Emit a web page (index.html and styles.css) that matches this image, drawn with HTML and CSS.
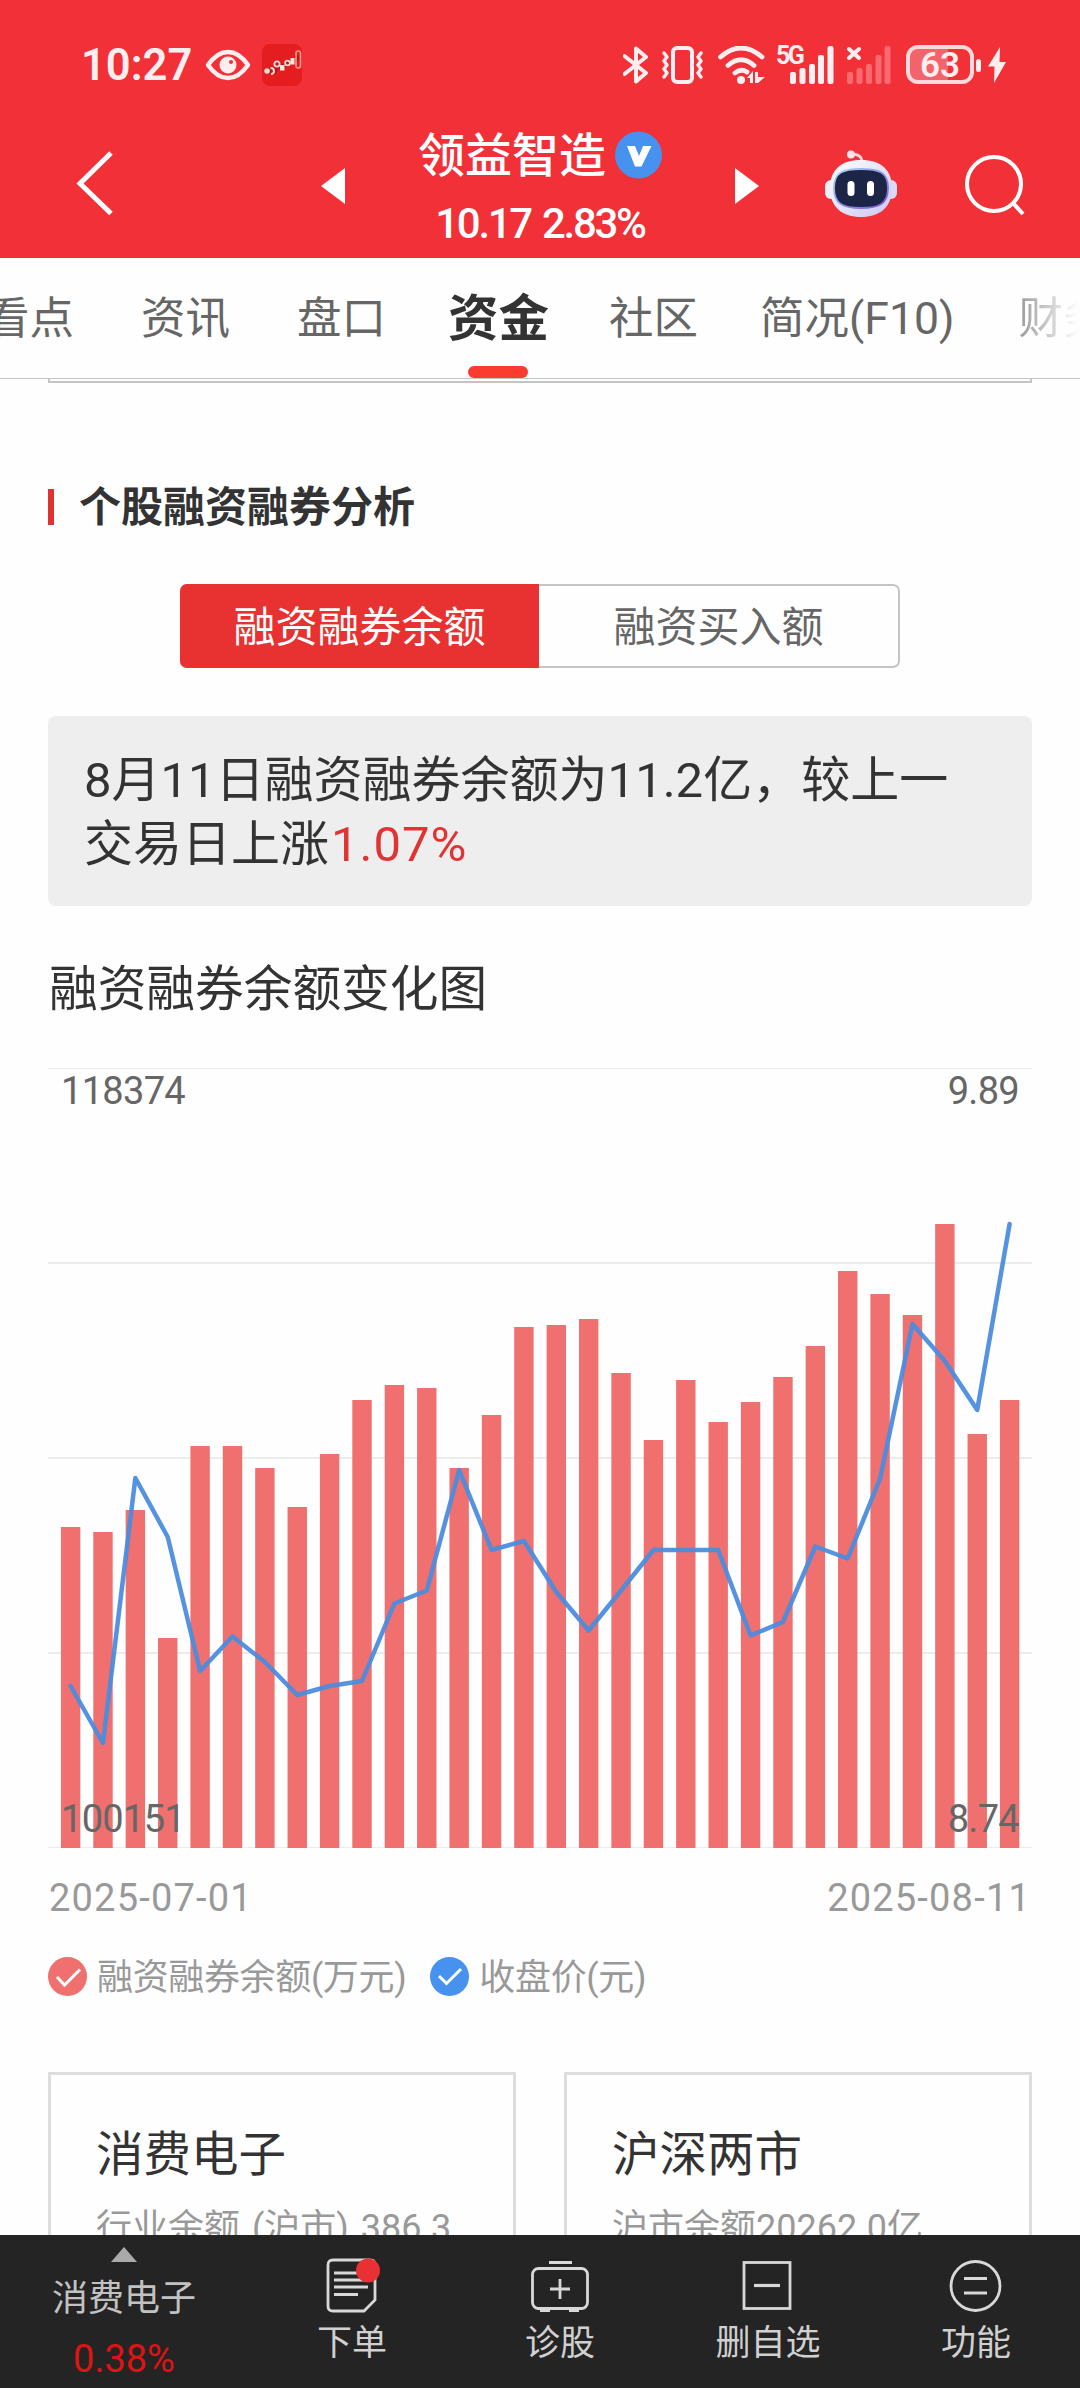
FILE: index.html
```html
<!DOCTYPE html>
<html lang="zh-CN">
<head>
    <meta charset="UTF-8">
    <meta name="viewport" content="width=device-width, initial-scale=1.0">
    <title>领益智造 - 资金</title>
    <link rel="stylesheet" href="styles.css">
</head>
<body>
    <header class="header">
        <div class="status-bar">
            <div class="status-left">
                <span class="time">10:27</span>
                <svg class="eye" width="46" height="32" viewBox="0 0 46 32">
                    <path d="M3 16 Q12 3 23 3 Q34 3 43 16 Q34 29 23 29 Q12 29 3 16 Z" fill="none" stroke="#ffeef0" stroke-width="4.5" stroke-linejoin="round"/>
                    <circle cx="23" cy="16" r="8.5" fill="#ffeef0"/>
                    <circle cx="26" cy="13" r="2" fill="#f13038"/>
                </svg>
                <svg class="app-icon" width="40" height="42" viewBox="0 0 40 42">
                    <rect width="40" height="42" rx="8" fill="#e41d20"/>
                    <path d="M2 27 L8 26 L12 28 L16 20 L20 23 L26 19 L32 17 L37 13" fill="none" stroke="#b8181c" stroke-width="5"/>
                    <circle cx="5" cy="27" r="2.8" fill="#ffd9d2"/>
                    <path d="M8.500 24 Q12 24 12 27 Q12 30 9 30" fill="none" stroke="#ffd9d2" stroke-width="2"/>
                    <circle cx="15" cy="20" r="2.600" fill="none" stroke="#ffd9d2" stroke-width="1.800"/>
                    <rect x="18" y="21" width="4.500" height="5.500" fill="#ffe9e4"/>
                    <circle cx="25.500" cy="19" r="2.400" fill="none" stroke="#ffd9d2" stroke-width="1.800"/>
                    <rect x="28.500" y="14" width="4" height="6.500" fill="#ffe9e4"/>
                    <rect x="34" y="7" width="4.500" height="17" rx="2.200" fill="none" stroke="#ff9c8c" stroke-width="1.600"/>
                </svg>
            </div>
            <div class="status-right">
                <svg width="26" height="38" viewBox="0 0 26 38">
                    <path d="M1.500 10 L23 27 L13 35.500 V2.500 L23 11 L1.500 28" fill="none" stroke="#ffeef0" stroke-width="4" stroke-linejoin="round" stroke-linecap="round"/>
                </svg>
                <svg class="vibrate" width="43" height="38" viewBox="0 0 43 38">
                    <rect x="12" y="2" width="19" height="34" rx="4" fill="none" stroke="#ffeef0" stroke-width="4"/>
                    <path d="M3 7 L6 11 L3 15 L6 19 L3 23 L6 27 L3 31" fill="none" stroke="#ffeef0" stroke-width="3.500" stroke-linecap="round" stroke-linejoin="round"/>
                    <path d="M40 7 L37 11 L40 15 L37 19 L40 23 L37 27 L40 31" fill="none" stroke="#ffeef0" stroke-width="3.500" stroke-linecap="round" stroke-linejoin="round"/>
                </svg>
                <svg class="wifi" width="48" height="38" viewBox="0 0 48 38">
                    <path d="M2.500 11 Q23 -7 44 11 M10 19.500 Q23 8 36 19.500 M17 27 Q23 22 29 26" fill="none" stroke="#ffeef0" stroke-width="4.800" stroke-linecap="round"/>
                    <circle cx="23" cy="34" r="4" fill="#ffeef0"/>
                    <path d="M29 32 L35 25 V37 H32 V32 Z M37 26 H40 V31 H41 L47 31 L40 37 H37 Z" fill="#ffeef0"/>
                </svg>
                <div class="signal">
                    <span class="net">5G</span>
                    <svg width="58" height="38" viewBox="0 0 58 38">
                        <g fill="#ffeef0">
                            <rect x="13" y="26" width="6" height="12" rx="2"/>
                            <rect x="22.500" y="22" width="6" height="16" rx="2"/>
                            <rect x="32" y="18" width="6" height="20" rx="2"/>
                            <rect x="41" y="9" width="6" height="29" rx="2"/>
                            <rect x="50.500" y="0" width="6" height="38" rx="2"/>
                        </g>
                    </svg>
                </div>
                <svg class="signal-off" width="44" height="38" viewBox="0 0 44 38">
                    <path d="M2 3 L12 12 M12 3 L2 12" stroke="#ffeef0" stroke-width="4" stroke-linecap="round"/>
                    <g fill="#fb6a70">
                        <rect x="0" y="26" width="6" height="12" rx="2"/>
                        <rect x="9.500" y="22" width="6" height="16" rx="2"/>
                        <rect x="19" y="18" width="6" height="20" rx="2"/>
                        <rect x="28.500" y="9" width="6" height="29" rx="2"/>
                        <rect x="37.500" y="0" width="6" height="38" rx="2"/>
                    </g>
                </svg>
                <div class="battery"><span>63</span></div>
                <svg class="bolt" width="30" height="38" viewBox="0 0 30 38">
                    <rect x="0" y="13" width="5" height="13" rx="2.500" fill="#ffeef0"/>
                    <path d="M24 1 L12 20.500 H18.500 L18 37 L30 16 H23.500 Z" fill="#ffeef0"/>
                </svg>
            </div>
        </div>

        <div class="title-bar">
            <svg class="back" width="40" height="70" viewBox="0 0 40 70">
                <path d="M36 5 L5 35.500 L36 65.500" fill="none" stroke="#fff" stroke-width="5"/>
            </svg>
            <svg class="prev" width="24" height="36" viewBox="0 0 24 36">
                <path d="M24 0 V36 L0 18 Z" fill="#fff"/>
            </svg>
            <div class="stock">
                <div class="stock-name">
                    <h1>领益智造</h1>
                    <svg width="47" height="48" viewBox="0 0 47 48">
                        <circle cx="23.500" cy="24" r="23.500" fill="#4792ee"/>
                        <path d="M12 15 H20 L24 25 L28 15 H36.500 L26.500 35.500 H20 Z" fill="#fff"/>
                    </svg>
                </div>
                <p class="quote">10.17 2.83%</p>
            </div>
            <svg class="next" width="24" height="36" viewBox="0 0 24 36">
                <path d="M0 0 V36 L24 18 Z" fill="#fff"/>
            </svg>
            <svg class="robot" width="72" height="68" viewBox="0 0 72 68">
                <defs>
                    <linearGradient id="shell" x1="0" y1="0" x2="1" y2="1">
                        <stop offset="0.2" stop-color="#f6f5fc"/>
                        <stop offset="1" stop-color="#c9c8f0"/>
                    </linearGradient>
                    <linearGradient id="glow" x1="0" y1="0" x2="1" y2="1">
                        <stop offset="0" stop-color="#a9d8f5"/>
                        <stop offset="1" stop-color="#7b50dc"/>
                    </linearGradient>
                </defs>
                <path d="M26 4 Q37 4 37 12" fill="none" stroke="#f8dde4" stroke-width="2.500"/>
                <circle cx="26" cy="4.500" r="4" fill="#fbe4ea"/>
                <rect x="0" y="30" width="14" height="19" rx="6" fill="#eeeefa"/>
                <rect x="58" y="30" width="14" height="19" rx="6" fill="#dcdaf5"/>
                <path d="M36 10 C56 10 67 20 67 38 C67 58 54 67 36 67 C18 67 5 58 5 38 C5 20 16 10 36 10 Z" fill="url(#shell)"/>
                <path d="M36 19 C54 19 63 22 63 38 C63 54 54 58 36 58 C18 58 9 54 9 38 C9 22 18 19 36 19 Z" fill="#1c2546" stroke="url(#glow)" stroke-width="1.800"/>
                <rect x="22.500" y="31" width="7" height="15" rx="3.500" fill="#fff"/>
                <rect x="42" y="31" width="7" height="15" rx="3.500" fill="#fff"/>
            </svg>
            <svg class="search" width="60" height="62" viewBox="0 0 60 62">
                <circle cx="29" cy="29" r="27" fill="none" stroke="#fff" stroke-width="4"/>
                <path d="M48 48 L58 59" stroke="#fff" stroke-width="4"/>
            </svg>
        </div>
    </header>

    <nav class="tabs">
        <a>看点</a>
        <a>资讯</a>
        <a>盘口</a>
        <a class="active">资金</a>
        <a>社区</a>
        <a class="f10">简况(F10)</a>
        <a>财务</a>
    </nav>

    <main class="content">
        <div class="prev-card"></div>

        <h2 class="section-title">个股融资融券分析</h2>

        <div class="switch">
            <span class="switch-item on">融资融券余额</span>
            <span class="switch-item">融资买入额</span>
        </div>

        <p class="summary">8月11日融资融券余额为11.2亿，较上一交易日上涨<span class="up">1.07%</span></p>

        <h3 class="chart-title">融资融券余额变化图</h3>

        <div class="chart">
            <svg id="chart" width="984" height="780" viewBox="0 0 984 780"></svg>
            <span class="axis top-left">118374</span>
            <span class="axis top-right">9.89</span>
            <span class="axis bottom-left">100151</span>
            <span class="axis bottom-right">8.74</span>
        </div>
        <div class="dates">
            <span>2025-07-01</span>
            <span>2025-08-11</span>
        </div>

        <div class="legend">
            <svg width="39" height="39" viewBox="0 0 39 39">
                <circle cx="19.500" cy="19.500" r="19.500" fill="#ef706f"/>
                <path d="M9 20 L16.500 28 L32 12.500" fill="none" stroke="#fff" stroke-width="3"/>
            </svg>
            <span>融资融券余额(万元)</span>
            <svg width="39" height="39" viewBox="0 0 39 39">
                <circle cx="19.500" cy="19.500" r="19.500" fill="#4792ee"/>
                <path d="M9 19 L16.500 26.500 L31 12" fill="none" stroke="#fff" stroke-width="3"/>
            </svg>
            <span>收盘价(元)</span>
        </div>

        <div class="cards">
            <div class="card">
                <h4>消费电子</h4>
                <p class="industry">行业余额 (沪市) 386.3</p>
            </div>
            <div class="card">
                <h4>沪深两市</h4>
                <p>沪市余额20262.0亿,</p>
            </div>
        </div>
    </main>

    <footer class="bottom-bar">
        <div class="sector">
            <svg width="26" height="15" viewBox="0 0 26 15"><path d="M13 0 L26 15 H0 Z" fill="#aaa"/></svg>
            <span class="sector-name">消费电子</span>
            <span class="sector-rate">0.38%</span>
        </div>
        <div class="action">
            <svg width="58" height="56" viewBox="0 0 58 56">
                <path d="M10 2 H47 Q52 2 52 7 V42 L41 53 H10 Q5 53 5 48 V7 Q5 2 10 2 Z" fill="none" stroke="#d8d8d8" stroke-width="2.800"/>
                <path d="M11 15 H40 M11 22 H45 M11 29 H45 M11 36.500 H35" stroke="#d8d8d8" stroke-width="2.800"/>
                <circle cx="45" cy="12.500" r="12" fill="#e93033"/>
            </svg>
            <span>下单</span>
        </div>
        <div class="action">
            <svg width="58" height="56" viewBox="0 0 58 56">
                <path d="M18 4.500 H41" stroke="#d8d8d8" stroke-width="3"/>
                <rect x="1.500" y="10.500" width="55" height="40" rx="6" fill="none" stroke="#d8d8d8" stroke-width="2.800"/>
                <path d="M19 31 H39 M29 21 V41" stroke="#d8d8d8" stroke-width="2.800"/>
                <path d="M9 52 H19 M38 52 H48" stroke="#d8d8d8" stroke-width="4"/>
            </svg>
            <span>诊股</span>
        </div>
        <div class="action">
            <svg width="58" height="56" viewBox="0 0 58 56">
                <rect x="5" y="4.500" width="46" height="46" fill="none" stroke="#d8d8d8" stroke-width="2.800"/>
                <path d="M15 27.500 H41" stroke="#d8d8d8" stroke-width="3.200"/>
            </svg>
            <span>删自选</span>
        </div>
        <div class="action">
            <svg width="58" height="56" viewBox="0 0 58 56">
                <circle cx="28.500" cy="28" r="24.500" fill="none" stroke="#d8d8d8" stroke-width="2.800"/>
                <path d="M17 20.500 H40 M17 35 H40" stroke="#d8d8d8" stroke-width="3"/>
            </svg>
            <span>功能</span>
        </div>
    </footer>

    <script src="chart.js"></script>
</body>
</html>
```
FILE: styles.css
```css
* {
    margin: 0;
    padding: 0;
    box-sizing: border-box;
}

body {
    width: 1080px;
    height: 2388px;
    overflow: hidden;
    display: flex;
    flex-direction: column;
    background-color: #fefefe;
    color: #333;
    font-family: Roboto, 'Noto Sans CJK SC', sans-serif;
}

svg {
    display: block;
    flex-shrink: 0;
}

/* Header */
.header {
    height: 258px;
    flex-shrink: 0;
    background-color: #f13038;
    color: white;
}

.status-bar {
    height: 129px;
    padding: 0 74px 0 81px;
    display: flex;
    justify-content: space-between;
    align-items: center;
}

.status-left,
.status-right {
    display: flex;
    align-items: center;
}

.time {
    width: 124px;
    padding-top: 2px;
    font-size: 43.5px;
    font-weight: 600;
    line-height: 50px;
    color: #ffeef0;
}

.app-icon {
    margin-left: 11px;
}

.vibrate {
    margin-left: 12px;
}

.wifi {
    margin-left: 14px;
}

.signal {
    position: relative;
    margin-left: 11px;
}

.net {
    position: absolute;
    left: -1px;
    top: -3px;
    font-size: 25px;
    font-weight: 700;
    line-height: 26px;
    letter-spacing: -2.5px;
    color: #ffeef0;
}

.signal-off {
    margin-left: 12px;
}

.battery {
    width: 68px;
    height: 39px;
    margin-left: 15px;
    border: 4px solid #ffd9dc;
    border-radius: 12px;
    background: linear-gradient(to right, #f2636a 64%, #f13038 64%);
    text-align: center;
    font-size: 35px;
    font-weight: 600;
    line-height: 33px;
    color: #ffeef0;
}

.bolt {
    margin-left: 2px;
}

.title-bar {
    height: 129px;
    display: flex;
    align-items: flex-start;
}

.back {
    margin: 19px 0 0 75px;
}

.prev {
    margin: 39px 0 0 206px;
}

.stock {
    width: 390px;
    display: flex;
    flex-direction: column;
    align-items: center;
}

.stock-name {
    display: flex;
    align-items: center;
    gap: 9px;
    height: 52px;
}

.stock-name h1 {
    padding-top: 1px;
    font-size: 47px;
    font-weight: 500;
    line-height: 54px;
}

.quote {
    margin-top: 20px;
    font-size: 42px;
    font-weight: 500;
    line-height: 46px;
    letter-spacing: -2.3px;
    word-spacing: 3px;
}

.next {
    margin-top: 39px;
}

.robot {
    margin: 21px 0 0 66px;
}

.search {
    margin: 26px 0 0 68px;
}

/* Tabs */
.tabs {
    height: 121px;
    flex-shrink: 0;
    padding-top: 2px;
    margin-left: -15px;
    display: flex;
    align-items: center;
    gap: 67px;
    border-bottom: 1px solid #c4c4c4;
    overflow: hidden;
    white-space: nowrap;
}

.tabs a {
    font-size: 44.5px;
    line-height: 60px;
    color: #666;
}

.tabs .active {
    position: relative;
    margin: 0 -7px 0 -5px;
    font-size: 50.5px;
    font-weight: 700;
    color: #333;
}

.tabs .active::after {
    content: "";
    position: absolute;
    left: 20px;
    bottom: -29px;
    width: 60px;
    height: 12px;
    border-radius: 6px;
    background-color: #f93b30;
}

.tabs .f10 {
    margin: 0 -3px 0 -5px;
}

.tabs a:last-child {
    background: linear-gradient(to right, #999, #fefefe 60px);
    -webkit-background-clip: text;
    background-clip: text;
    color: transparent;
}

/* Content */
.content {
    height: 1856px;
    flex-shrink: 0;
    overflow: hidden;
    padding: 0 48px;
}

.prev-card {
    height: 4px;
    border: 2px solid #c4c4c4;
    border-top: none;
}

.section-title {
    display: flex;
    align-items: center;
    height: 60px;
    margin-top: 95px;
    font-size: 42px;
    font-weight: 700;
    line-height: 58px;
}

.section-title::before {
    content: "";
    width: 6px;
    height: 36px;
    margin-right: 25px;
    margin-bottom: 3px;
    background-color: #dd3333;
}

.switch {
    display: flex;
    width: 720px;
    height: 84px;
    margin: 46px auto 0;
    border: 2px solid #c4c4c4;
    border-radius: 7px;
}

.switch-item {
    flex: 1;
    text-align: center;
    font-size: 42px;
    line-height: 83px;
    color: #666;
}

.switch-item.on {
    margin: -2px 0 -2px -2px;
    line-height: 87px;
    border-radius: 7px 0 0 7px;
    background-color: #e83131;
    color: #fff;
}

.summary {
    height: 190px;
    margin-top: 48px;
    padding: 33px 36px 29px;
    border-radius: 8px;
    background-color: #eee;
    font-size: 49px;
    line-height: 64px;
}

.summary .up {
    margin-left: 2px;
    letter-spacing: 1px;
    color: #e03434;
}

.chart-title {
    margin: 50px 0 45px;
    padding-left: 1px;
    font-size: 48.7px;
    font-weight: 400;
    line-height: 67px;
}

.chart {
    position: relative;
    height: 780px;
}

.axis {
    position: absolute;
    font-size: 38px;
    line-height: 44px;
    letter-spacing: -0.7px;
    color: #666;
}

.top-left {
    left: 13px;
    top: 1px;
}

.top-right {
    right: 13px;
    top: 1px;
}

.bottom-left {
    left: 13px;
    bottom: 7px;
}

.bottom-right {
    right: 13px;
    bottom: 7px;
}

.dates {
    display: flex;
    justify-content: space-between;
    margin-top: 28px;
    padding: 0 1px;
    font-size: 38px;
    line-height: 44px;
    letter-spacing: 1.2px;
    color: #999;
}

.legend {
    display: flex;
    align-items: center;
    height: 44px;
    margin-top: 34px;
    font-size: 36px;
    letter-spacing: -0.35px;
    color: #999;
}

.legend span {
    margin: 0 24px 0 10px;
    padding-top: 3px;
    line-height: 44px;
}

.cards {
    display: flex;
    gap: 48px;
    margin-top: 74px;
}

.card {
    flex: 1;
    height: 300px;
    padding: 48px 45px;
    border: 3px solid #ddd;
}

.card h4 {
    font-size: 47.5px;
    font-weight: 400;
    line-height: 64px;
}

.card p {
    margin-top: 17px;
    font-size: 36px;
    line-height: 48px;
    white-space: nowrap;
    color: #999;
}

.card .industry {
    word-spacing: 3px;
}

/* Bottom bar */
.bottom-bar {
    display: flex;
    height: 153px;
    flex-shrink: 0;
    background-color: #242424;
    color: #d0d0d0;
    font-size: 35px;
}

.sector {
    width: 248px;
    padding-top: 12px;
    display: flex;
    flex-direction: column;
    align-items: center;
}

.sector-name {
    margin-top: 15px;
    font-size: 36px;
    line-height: 44px;
    color: #c2c2c2;
}

.sector-rate {
    margin-top: 16px;
    font-size: 38px;
    line-height: 44px;
    color: #dc1414;
}

.action {
    width: 208px;
    padding-top: 23px;
    display: flex;
    flex-direction: column;
    align-items: center;
}

.action span {
    margin-top: 8px;
    line-height: 44px;
}
```
FILE: chart.js
```js
// margin balance bars, top edge of each one in chart units
const bars = [459, 464, 442, 570, 378, 378, 400, 439, 386, 332, 317, 320, 400, 347, 259,
    257, 251, 305, 372, 312, 354, 334, 309, 278, 203, 226, 247, 156, 366, 332];
// closing price
const prices = [618, 675, 410, 469, 603, 568.5, 594, 627, 618, 613, 535.5, 522.5, 402, 482, 473,
    524, 562.5, 522.5, 482, 482, 482, 567.5, 554, 478.5, 490.5, 410.5, 256, 293, 342, 156];

const step = 32.38;
const barWidth = 19.4;
const left = 12.9;
const bottom = 780;

let svg = '';
[[0, 1], [194, 2], [389, 2], [584, 2], [779, 1]].forEach(([y, h]) => {
    svg += `<rect x="0" y="${y}" width="984" height="${h}" fill="#ececec"/>`;
});
bars.forEach((y, i) => {
    svg += `<rect x="${left + i * step}" y="${y}" width="${barWidth}" height="${bottom - y}" fill="#ef706f"/>`;
});
const points = prices.map((y, i) => `${left + barWidth / 2 + i * step},${y}`).join(' ');
svg += `<polyline points="${points}" fill="none" stroke="#4a8cdf" stroke-opacity="0.94" stroke-width="4.5" stroke-linejoin="round" stroke-linecap="round"/>`;

document.getElementById('chart').innerHTML = svg;
```
